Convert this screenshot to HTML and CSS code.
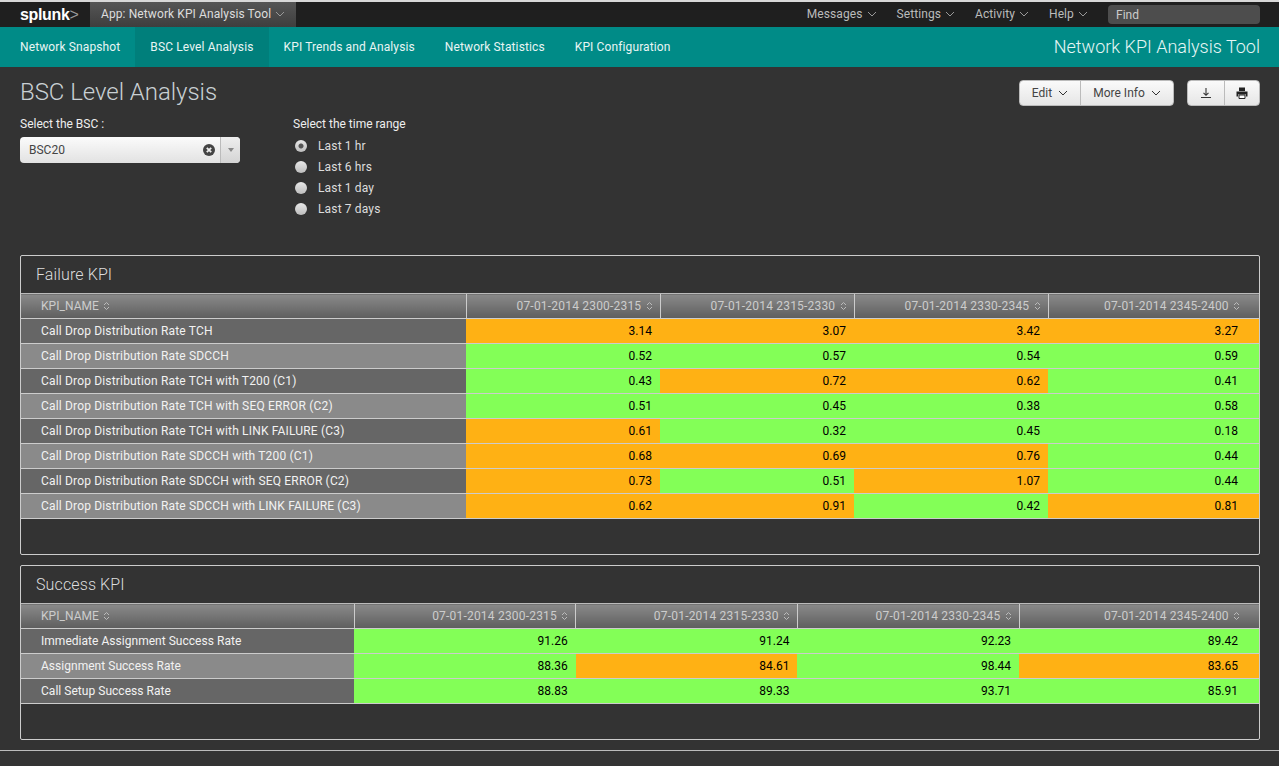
FILE: index.html
```html
<!DOCTYPE html>
<html lang="en">
<head>
<meta charset="utf-8">
<title>BSC Level Analysis</title>
<link rel="stylesheet" href="styles.css">
</head>
<body>
<header class="topbar">
  <div class="logo">splunk<span class="logo-gt">&gt;</span></div>
  <div class="app-menu">App: Network KPI Analysis Tool <svg class="chev" viewBox="0 0 10 6"><path d="M1 1l4 4 4-4"/></svg></div>
  <nav class="sys-nav">
    <a class="sys-link">Messages <svg class="chev" viewBox="0 0 10 6"><path d="M1 1l4 4 4-4"/></svg></a>
    <a class="sys-link">Settings <svg class="chev" viewBox="0 0 10 6"><path d="M1 1l4 4 4-4"/></svg></a>
    <a class="sys-link">Activity <svg class="chev" viewBox="0 0 10 6"><path d="M1 1l4 4 4-4"/></svg></a>
    <a class="sys-link">Help <svg class="chev" viewBox="0 0 10 6"><path d="M1 1l4 4 4-4"/></svg></a>
  </nav>
  <div class="find">Find</div>
</header>
<nav class="appbar">
  <a class="app-tab">Network Snapshot</a>
  <a class="app-tab active">BSC Level Analysis</a>
  <a class="app-tab">KPI Trends and Analysis</a>
  <a class="app-tab">Network Statistics</a>
  <a class="app-tab">KPI Configuration</a>
  <div class="app-title">Network KPI Analysis Tool</div>
</nav>
<main class="content">
  <div class="title-row">
    <h1 class="page-title">BSC Level Analysis</h1>
    <div class="actions">
      <div class="btn-group">
        <button class="btn btn-edit">Edit <svg class="chev dark" viewBox="0 0 10 6"><path d="M1 1l4 4 4-4"/></svg></button>
        <button class="btn btn-info">More Info <svg class="chev dark" viewBox="0 0 10 6"><path d="M1 1l4 4 4-4"/></svg></button>
      </div>
      <div class="btn-group">
        <button class="btn btn-icon"><svg class="icon" viewBox="0 0 12 12"><path d="M6 1v7M3.5 5.8L6 8.3l2.5-2.5M1 10.5h10" fill="none" stroke="#333" stroke-width="1.1"/></svg></button>
        <button class="btn btn-icon"><svg class="icon" viewBox="0 0 12 12"><path d="M3 .5h6v3.5H3z" fill="#222"/><path d="M.5 4.5h11V9.5H10V7.5H2v2H.5z" fill="#222"/><path d="M3 8h6v3.5H3z" fill="#fff" stroke="#222"/></svg></button>
      </div>
    </div>
  </div>
  <div class="filters">
    <div class="filter-bsc">
      <div class="filter-label">Select the BSC :</div>
      <div class="select">
        <span class="select-value">BSC20</span>
        <svg class="clear" viewBox="0 0 12 12"><circle cx="6" cy="6" r="6" fill="#444"/><path d="M3.8 3.8l4.4 4.4M8.2 3.8l-4.4 4.4" stroke="#eee" stroke-width="1.8"/></svg>
        <span class="select-arrow"><span class="caret"></span></span>
      </div>
    </div>
    <div class="filter-time">
      <div class="filter-label">Select the time range</div>
      <div class="radio-row"><span class="radio checked"></span>Last 1 hr</div>
      <div class="radio-row"><span class="radio"></span>Last 6 hrs</div>
      <div class="radio-row"><span class="radio"></span>Last 1 day</div>
      <div class="radio-row"><span class="radio"></span>Last 7 days</div>
    </div>
  </div>

  <section class="panel panel-failure">
    <h2 class="panel-title">Failure KPI</h2>
    <table class="kpi">
      <colgroup><col class="c-name"><col class="c-a"><col class="c-a"><col class="c-a"><col></colgroup>
      <thead><tr>
        <th class="th-name">KPI_NAME <svg class="sort" viewBox="0 0 7 10"><path d="M1 4l2.5-2.5L6 4M1 6l2.5 2.5L6 6"/></svg></th>
        <th>07-01-2014 2300-2315 <svg class="sort" viewBox="0 0 7 10"><path d="M1 4l2.5-2.5L6 4M1 6l2.5 2.5L6 6"/></svg></th>
        <th>07-01-2014 2315-2330 <svg class="sort" viewBox="0 0 7 10"><path d="M1 4l2.5-2.5L6 4M1 6l2.5 2.5L6 6"/></svg></th>
        <th>07-01-2014 2330-2345 <svg class="sort" viewBox="0 0 7 10"><path d="M1 4l2.5-2.5L6 4M1 6l2.5 2.5L6 6"/></svg></th>
        <th>07-01-2014 2345-2400 <svg class="sort" viewBox="0 0 7 10"><path d="M1 4l2.5-2.5L6 4M1 6l2.5 2.5L6 6"/></svg></th>
      </tr></thead>
      <tbody>
        <tr><td class="name">Call Drop Distribution Rate TCH</td><td class="o">3.14</td><td class="o">3.07</td><td class="o">3.42</td><td class="o">3.27</td></tr>
        <tr><td class="name">Call Drop Distribution Rate SDCCH</td><td class="g">0.52</td><td class="g">0.57</td><td class="g">0.54</td><td class="g">0.59</td></tr>
        <tr><td class="name">Call Drop Distribution Rate TCH with T200 (C1)</td><td class="g">0.43</td><td class="o">0.72</td><td class="o">0.62</td><td class="g">0.41</td></tr>
        <tr><td class="name">Call Drop Distribution Rate TCH with SEQ ERROR (C2)</td><td class="g">0.51</td><td class="g">0.45</td><td class="g">0.38</td><td class="g">0.58</td></tr>
        <tr><td class="name">Call Drop Distribution Rate TCH with LINK FAILURE (C3)</td><td class="o">0.61</td><td class="g">0.32</td><td class="g">0.45</td><td class="g">0.18</td></tr>
        <tr><td class="name">Call Drop Distribution Rate SDCCH with T200 (C1)</td><td class="o">0.68</td><td class="o">0.69</td><td class="o">0.76</td><td class="g">0.44</td></tr>
        <tr><td class="name">Call Drop Distribution Rate SDCCH with SEQ ERROR (C2)</td><td class="o">0.73</td><td class="g">0.51</td><td class="o">1.07</td><td class="g">0.44</td></tr>
        <tr><td class="name">Call Drop Distribution Rate SDCCH with LINK FAILURE (C3)</td><td class="o">0.62</td><td class="o">0.91</td><td class="g">0.42</td><td class="o">0.81</td></tr>
      </tbody>
    </table>
  </section>

  <section class="panel panel-success">
    <h2 class="panel-title">Success KPI</h2>
    <table class="kpi kpi-success">
      <colgroup><col class="c-name"><col class="c-a"><col class="c-a"><col class="c-a"><col></colgroup>
      <thead><tr>
        <th class="th-name">KPI_NAME <svg class="sort" viewBox="0 0 7 10"><path d="M1 4l2.5-2.5L6 4M1 6l2.5 2.5L6 6"/></svg></th>
        <th>07-01-2014 2300-2315 <svg class="sort" viewBox="0 0 7 10"><path d="M1 4l2.5-2.5L6 4M1 6l2.5 2.5L6 6"/></svg></th>
        <th>07-01-2014 2315-2330 <svg class="sort" viewBox="0 0 7 10"><path d="M1 4l2.5-2.5L6 4M1 6l2.5 2.5L6 6"/></svg></th>
        <th>07-01-2014 2330-2345 <svg class="sort" viewBox="0 0 7 10"><path d="M1 4l2.5-2.5L6 4M1 6l2.5 2.5L6 6"/></svg></th>
        <th>07-01-2014 2345-2400 <svg class="sort" viewBox="0 0 7 10"><path d="M1 4l2.5-2.5L6 4M1 6l2.5 2.5L6 6"/></svg></th>
      </tr></thead>
      <tbody>
        <tr><td class="name">Immediate Assignment Success Rate</td><td class="g">91.26</td><td class="g">91.24</td><td class="g">92.23</td><td class="g">89.42</td></tr>
        <tr><td class="name">Assignment Success Rate</td><td class="g">88.36</td><td class="o">84.61</td><td class="g">98.44</td><td class="o">83.65</td></tr>
        <tr><td class="name">Call Setup Success Rate</td><td class="g">88.83</td><td class="g">89.33</td><td class="g">93.71</td><td class="g">85.91</td></tr>
      </tbody>
    </table>
  </section>
</main>
<footer class="footer"></footer>
</body>
</html>
```
FILE: styles.css
```css
* { box-sizing: border-box; }
html, body { margin: 0; height: 100%; }
body { background: #333; color: #eee; font-family: Roboto, "Liberation Sans", sans-serif; font-size: 12px; overflow: hidden; height: 766px; }

.topbar { display: flex; align-items: stretch; height: 27px; background: #1f1f1f; border-top: 2px solid #d8d8d8; color: #ccc; }
.logo { width: 90px; padding-left: 20px; font-family: "Liberation Sans", sans-serif; font-size: 16px; font-weight: 700; line-height: 25px; color: #fff; letter-spacing: -0.35px; white-space: nowrap; }
.logo-gt { font-weight: 400; color: #999; }
.app-menu { width: 206px; background: linear-gradient(#555, #3e3e3e); padding-left: 11px; line-height: 25px; font-size: 12px; letter-spacing: .1px; color: #ddd; white-space: nowrap; }
.chev { width: 10px; height: 6px; fill: none; stroke: #999; stroke-width: 1; margin-left: 1px; vertical-align: 1px; }
.chev.dark { stroke: #333; }
.sys-nav { margin-left: auto; display: flex; line-height: 25px; }
.sys-link { margin-right: 20px; white-space: nowrap; color: #bbb; letter-spacing: .08px; }
.find { width: 152px; height: 19px; margin: 3px 19px 0 0; background: #4d4d4d; border-radius: 4px; padding-left: 8px; line-height: 20px; color: #ccc; }

.appbar { display: flex; height: 40px; background: #008b87; align-items: stretch; }
.app-tab { padding: 0 15px; line-height: 40px; color: #e8f5f4; font-size: 12px; letter-spacing: .12px; white-space: nowrap; }
.app-tab:first-child { padding-left: 20px; }
.app-tab.active { background: #007f7b; }
.app-title { margin-left: auto; padding-right: 19px; font-size: 18px; font-weight: 300; line-height: 40px; color: #e6f6f5; }

.content { padding: 0 19px 0 20px; }
.title-row { display: flex; justify-content: space-between; height: 49px; }
.page-title { margin: 9px 0 0; font-size: 24px; font-weight: 300; line-height: 32px; color: #c9d0d4; letter-spacing: -.05px; }
.actions { display: flex; gap: 13px; padding-top: 13px; height: 39px; }
.btn-group { display: flex; height: 26px; background: linear-gradient(#fafafa, #e6e6e6); border-radius: 4px; border: 1px solid #bbb; }
.btn { border: 0; background: none; font-family: inherit; font-size: 12px; color: #444; height: 24px; padding: 0; white-space: nowrap; }
.btn-edit { width: 61px; border-right: 1px solid #bbb; }
.btn-info { width: 92px; }
.btn-info .chev, .btn-edit .chev { margin-left: 3px; }
.btn-icon { width: 35.5px; display: flex; align-items: center; justify-content: center; }
.btn-icon + .btn-icon { border-left: 1px solid #bbb; }
.icon { width: 12px; height: 12px; }

.filters { display: flex; height: 139px; }
.filter-bsc { width: 273px; }
.filter-label { line-height: 16px; color: #eee; font-size: 12px; }
.select { display: flex; align-items: center; width: 220px; height: 26px; margin-top: 5px; background: linear-gradient(#fbfbfb, #e2e2e2); border-radius: 4px; color: #444; }
.select-value { flex: 1; padding-left: 9px; }
.clear { width: 12px; height: 12px; margin-right: 5px; }
.select-arrow { width: 20px; height: 26px; border-left: 1px solid #bbb; display: flex; align-items: center; justify-content: center; background: linear-gradient(#eee, #d4d4d4); border-radius: 0 4px 4px 0; }
.caret { border: 3.5px solid transparent; border-top: 4px solid #888; border-bottom: 0; }
.radio-row { display: flex; align-items: center; height: 21px; color: #ddd; letter-spacing: .15px; }
.filter-label + .radio-row { margin-top: 3px; }
.radio { width: 12px; height: 12px; border-radius: 50%; background: linear-gradient(#e8e8e8, #bdbdbd); margin: 0 11px 0 2px; }
.radio.checked { background: radial-gradient(circle, #555 0 2px, transparent 3px), linear-gradient(#e8e8e8, #bdbdbd); }

.panel { width: 1240px; border: 1px solid #ccc; border-radius: 2px; margin: 0; }
.panel-failure { height: 300px; }
.panel-success { height: 175px; margin-top: 10px; }
.panel-title { margin: 0; height: 37px; padding-left: 15px; font-size: 16px; font-weight: 300; line-height: 38px; letter-spacing: .12px; color: #ddd; }

.kpi { width: 100%; border-collapse: collapse; table-layout: fixed; font-size: 12px; }
.c-name { width: 445px; }
.c-a { width: 194px; }
.kpi-success .c-name { width: 333px; }
.kpi-success .c-a { width: 221.7px; }
.kpi th { height: 25px; padding: 0 7px 0 8px; text-align: right; font-weight: 400; letter-spacing: .2px; color: #ccc; background: linear-gradient(#8a8a8a, #5e5e5e); border-top: 1px solid #bbb; border-bottom: 1px solid #ccc; border-left: 1px solid #ccc; white-space: nowrap; }
.kpi th:first-child { border-left: 0; }
.kpi th:last-child { padding-right: 19px; }
.kpi .th-name { text-align: left; padding-left: 20px; letter-spacing: .05px; }
.sort { width: 7px; height: 10px; fill: none; stroke: #bbb; stroke-width: 1; margin-left: 1px; vertical-align: -1px; }
.kpi td { height: 25px; padding: 0 8px; text-align: right; color: #000; border-bottom: 1px solid #ccc; white-space: nowrap; }
.kpi td:last-child { padding-right: 21px; }
.kpi td.name { text-align: left; padding-left: 20px; color: #f2f2f2; background: #666; letter-spacing: .17px; }
.kpi-success td.name { letter-spacing: .03px; }
.kpi tbody tr:nth-child(even) td.name { background: #8a8a8a; }
.kpi td.o { background: #ffb114; }
.kpi td.g { background: #83ff57; }

.footer { margin-top: 10px; border-top: 1px solid #bbb; height: 16px; }
```
